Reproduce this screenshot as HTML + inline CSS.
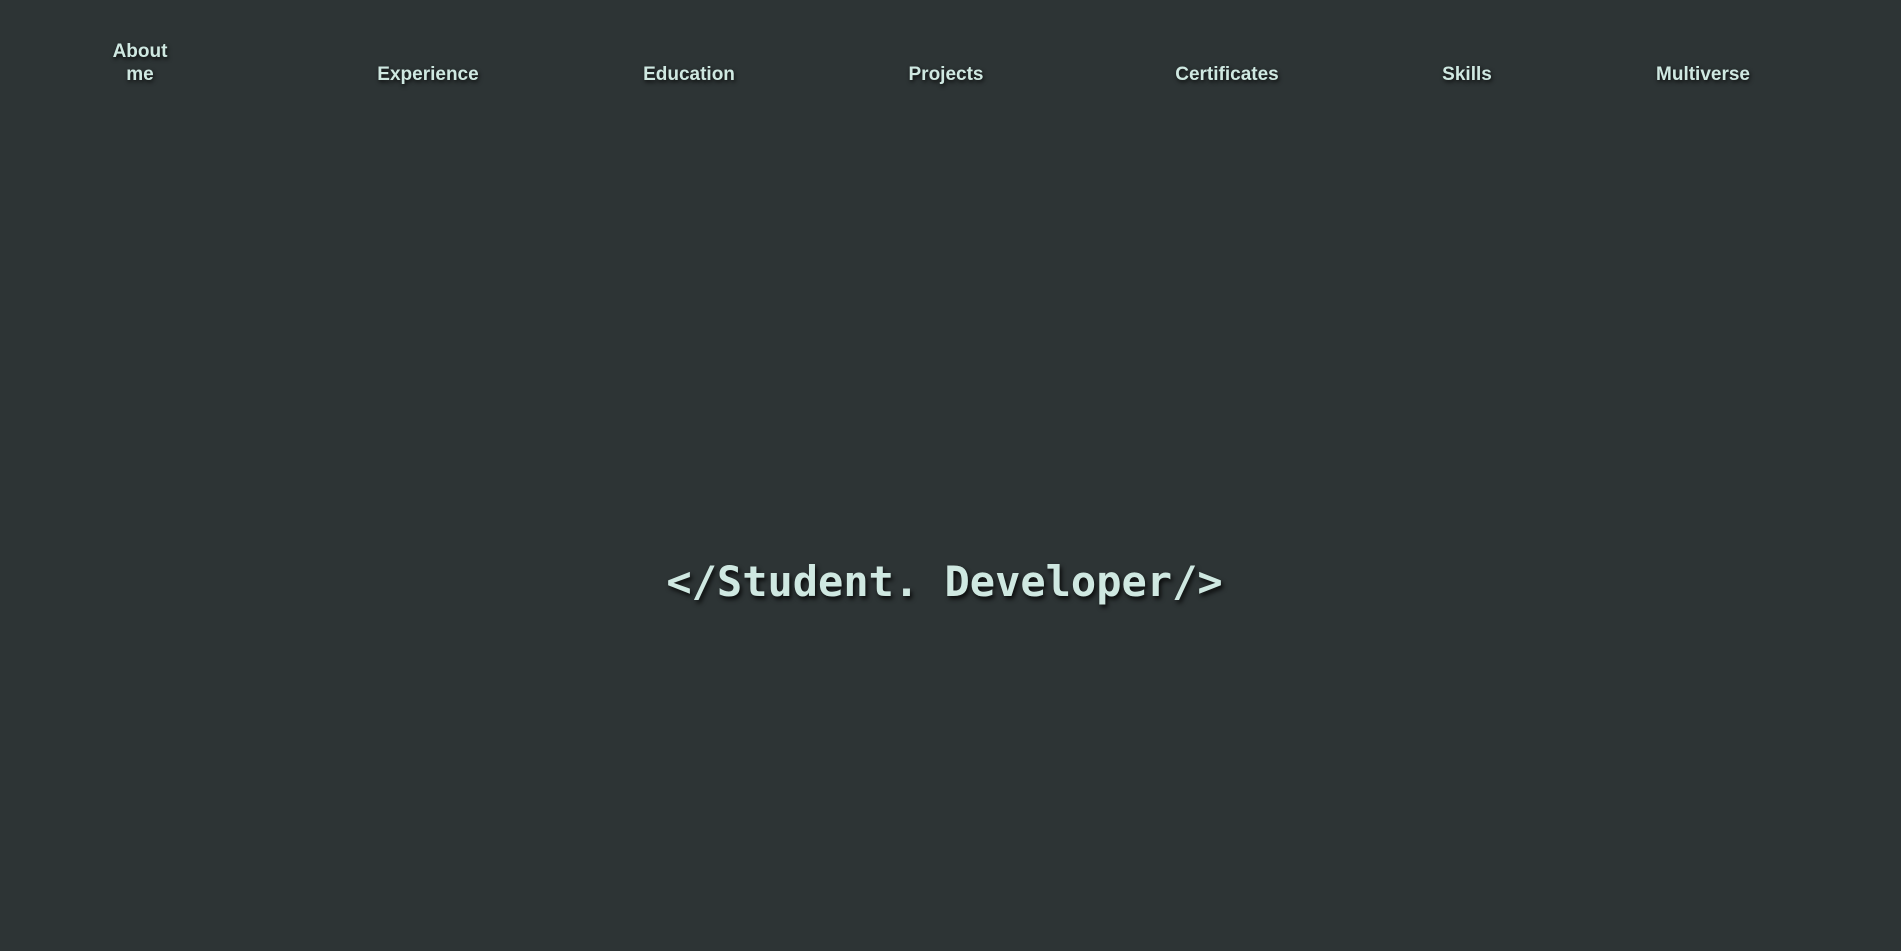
<!DOCTYPE html>
<html><head><meta charset="utf-8">
<style>
html,body{margin:0;padding:0;width:1901px;height:951px;background:#2d3435;overflow:hidden}
.n{position:absolute;transform:translateX(-50%);font-family:"Liberation Sans",sans-serif;font-weight:bold;font-size:19px;color:#cfe8e1;text-shadow:1px 2px 4px rgba(0,0,0,.8);text-align:center;line-height:23px;white-space:nowrap}
.h{position:absolute;left:-6px;width:1901px;top:557px;text-align:center;font-family:"DejaVu Sans Mono","Liberation Mono",monospace;font-weight:bold;font-size:42px;color:#cfe8e1;text-shadow:2px 3px 5px rgba(0,0,0,.8);line-height:50px}
</style></head><body>
<div class="n" style="left:140px;top:40px">About<br>me</div>
<div class="n" style="left:428px;top:63px">Experience</div>
<div class="n" style="left:689px;top:63px">Education</div>
<div class="n" style="left:946px;top:63px">Projects</div>
<div class="n" style="left:1227px;top:63px">Certificates</div>
<div class="n" style="left:1467px;top:63px">Skills</div>
<div class="n" style="left:1703px;top:63px">Multiverse</div>
<div class="h">&lt;/Student. Developer/&gt;</div>
</body></html>
